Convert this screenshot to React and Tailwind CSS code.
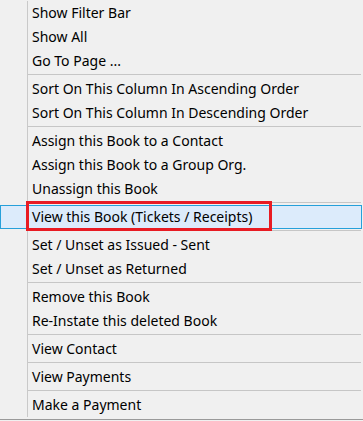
import React from "react";

const groups = [
  ["Show Filter Bar", "Show All", "Go To Page ..."],
  ["Sort On This Column In Ascending Order", "Sort On This Column In Descending Order"],
  ["Assign this Book to a Contact", "Assign this Book to a Group Org.", "Unassign this Book"],
  ["View this Book (Tickets / Receipts)"],
  ["Set / Unset as Issued - Sent", "Set / Unset as Returned"],
  ["Remove this Book", "Re-Instate this deleted Book"],
  ["View Contact"],
  ["View Payments"],
  ["Make a Payment"],
];

function Row({ label, active }) {
  if (active) {
    return (
      <div className="flex h-[24px] w-[362px] items-center border border-[#26a0da] bg-[#dcebfb]">
        <span className="pl-[31px] leading-none">{label}</span>
      </div>
    );
  }
  return (
    <div className="flex h-[24px] w-[362px]">
      <div className="w-[27px] shrink-0" />
      <div className="flex flex-1 items-center border-l border-[#c9c9c9] pl-[4px]">
        <span className="leading-none">{label}</span>
      </div>
    </div>
  );
}

function Sep() {
  return (
    <div className="flex h-[4px] w-[362px]">
      <div className="w-[27px] shrink-0" />
      <div className="flex-1 border-l border-[#c9c9c9] pt-px">
        <div className="h-px w-[333px] bg-[#c6c6c6]" />
      </div>
    </div>
  );
}

export default function App() {
  return (
    <div
      className="relative h-[421px] w-[363px] overflow-hidden bg-[#f0f0f0] text-[14px] text-[#000]"
      style={{ fontFamily: '"Noto Sans", "Open Sans", sans-serif' }}
    >
      <div className="flex flex-col pt-px">
        {groups.map((g, gi) => (
          <React.Fragment key={gi}>
            {gi > 0 && <Sep />}
            {g.map((l) => (
              <Row key={l} label={l} active={gi === 3} />
            ))}
          </React.Fragment>
        ))}
      </div>
      <div className="mt-[2px] h-px w-full bg-[#9a9a9a]" />
      <div className="absolute left-[26px] top-[201px] h-[30px] w-[246px] border-[3px] border-[#e81b23]" />
    </div>
  );
}
